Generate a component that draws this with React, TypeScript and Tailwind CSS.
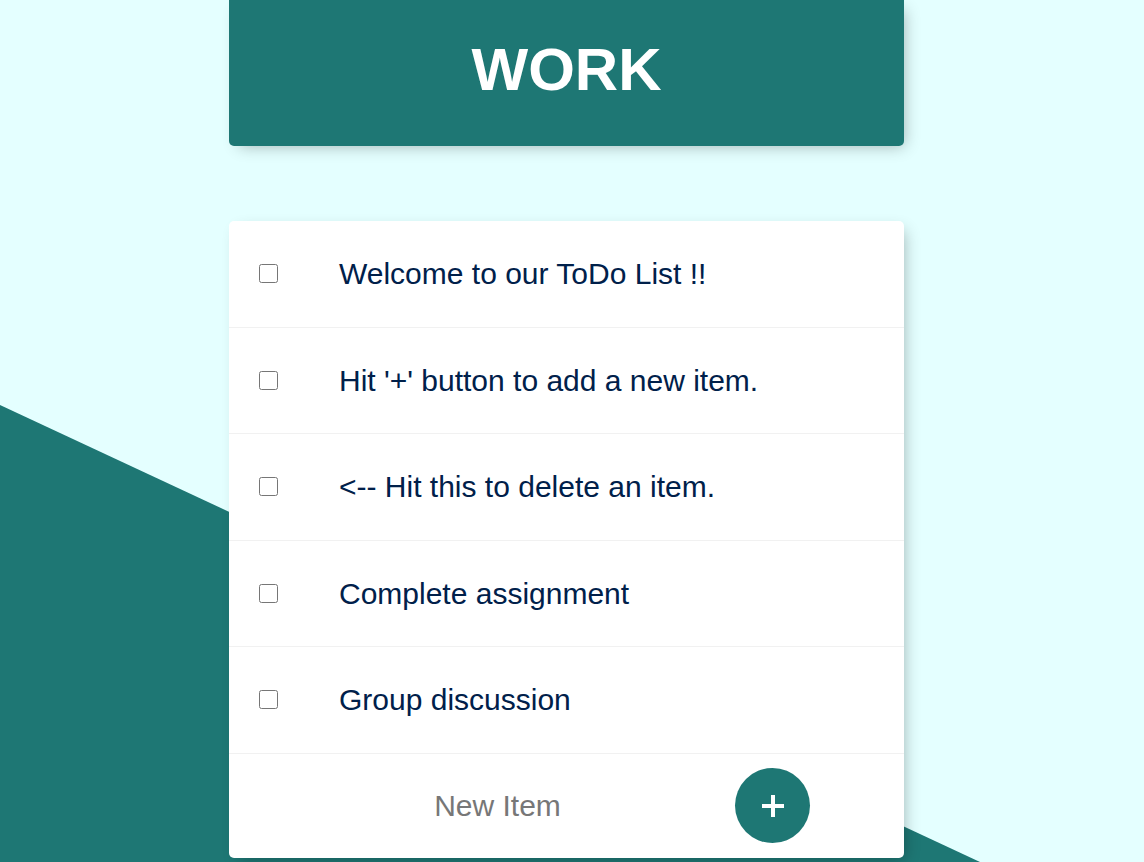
const items = [
  "Welcome to our ToDo List !!",
  "Hit '+' button to add a new item.",
  "<-- Hit this to delete an item.",
  "Complete assignment",
  "Group discussion",
];

export default function App() {
  return (
    <div
      className="relative h-[862px] overflow-hidden bg-[#e4ffff]"
      style={{ fontFamily: '"Liberation Sans", Arial, sans-serif' }}
    >
      <div className="absolute inset-0 bg-[#1e7774] [clip-path:polygon(0_405px,980px_862px,0_862px)]" />

      <div className="relative ml-[229px] w-[675px]">
        <div className="flex h-[146px] items-center justify-center rounded-b-[5px] bg-[#1e7774] pb-[6px] shadow-[5px_5px_15px_-5px_rgba(0,0,0,0.3)]">
          <h1 className="text-[60px] font-bold text-white">WORK</h1>
        </div>

        <div className="mt-[75px] overflow-hidden rounded-[5px] bg-white shadow-[5px_5px_15px_-5px_rgba(0,0,0,0.3)]">
          {items.map((text) => (
            <div
              key={text}
              className="flex h-[106.5px] items-center border-b border-[#f1f1f1]"
            >
              <input
                type="checkbox"
                className="ml-[30px] h-[19px] w-[19px] m-0"
              />
              <p className="ml-[61px] text-[30px] text-[#00204a]">{text}</p>
            </div>
          ))}

          <form
            className="flex h-[104.5px] items-center"
            onSubmit={(e) => e.preventDefault()}
          >
            <input
              type="text"
              placeholder="New Item"
              className="ml-[37px] h-[60px] w-[463px] text-center text-[30px] text-[#00204a] outline-none placeholder:text-[#777777]"
            />
            <button
              type="submit"
              className="ml-[6px] flex h-[75px] w-[75px] items-center justify-center rounded-full bg-[#1e7774]"
            >
              <svg width="22" height="22" viewBox="0 0 22 22">
                <rect x="0" y="9" width="22" height="4" fill="#fff" />
                <rect x="9" y="0" width="4" height="22" fill="#fff" />
              </svg>
            </button>
          </form>
        </div>
      </div>
    </div>
  );
}
